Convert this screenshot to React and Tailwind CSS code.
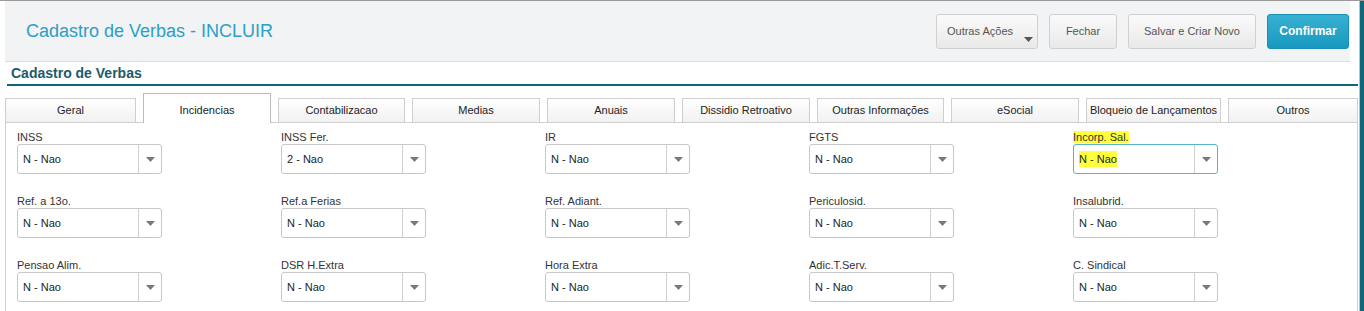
import React from 'react';

const tabs = [
  { label: 'Geral', w: 'w-[131px]' },
  { label: 'Incidencias', w: 'w-[128px]', active: true },
  { label: 'Contabilizacao', w: 'w-[127px]' },
  { label: 'Medias', w: 'w-[128px]' },
  { label: 'Anuais', w: 'w-[128px]' },
  { label: 'Dissidio Retroativo', w: 'w-[128px]' },
  { label: 'Outras Informações', w: 'w-[127px]' },
  { label: 'eSocial', w: 'w-[128px]' },
  { label: 'Bloqueio de Lançamentos', w: 'w-[135px]' },
  { label: 'Outros', w: 'w-[130px]' },
];

const fields = [
  { label: 'INSS', value: 'N - Nao' },
  { label: 'INSS Fer.', value: '2 - Nao' },
  { label: 'IR', value: 'N - Nao' },
  { label: 'FGTS', value: 'N - Nao' },
  { label: 'Incorp. Sal.', value: 'N - Nao', focused: true },
  { label: 'Ref. a 13o.', value: 'N - Nao' },
  { label: 'Ref.a Ferias', value: 'N - Nao' },
  { label: 'Ref. Adiant.', value: 'N - Nao' },
  { label: 'Periculosid.', value: 'N - Nao' },
  { label: 'Insalubrid.', value: 'N - Nao' },
  { label: 'Pensao Alim.', value: 'N - Nao' },
  { label: 'DSR H.Extra', value: 'N - Nao' },
  { label: 'Hora Extra', value: 'N - Nao' },
  { label: 'Adic.T.Serv.', value: 'N - Nao' },
  { label: 'C. Sindical', value: 'N - Nao' },
];

const Arrow = ({ className }) => (
  <svg width="9" height="5" viewBox="0 0 9 5" className={className}>
    <path d="M0 0 L9 0 L4.5 5 Z" fill="currentColor" />
  </svg>
);

const SelectField = ({ label, value, focused }) => (
  <div className="flex flex-col">
    <div className="h-[14px] leading-[14px] text-[11px] text-[#333]">
      <span className={focused ? 'bg-[#ffff3c]' : ''}>{label}</span>
    </div>
    <div
      className={`w-[145px] h-[30px] rounded-[3px] border bg-white flex items-stretch ${
        focused ? 'border-[#56b4d3]' : 'border-[#c8c8c8]'
      }`}
    >
      <div className="flex-1 flex items-center pl-[5px] text-[11px] text-[#222]">
        <span className={focused ? 'bg-[#ffff3c]' : ''}>{value}</span>
      </div>
      <div className="w-[23px] border-l border-[#cfcfcf] flex items-center justify-center">
        <Arrow className="text-[#7a7a7a]" />
      </div>
    </div>
  </div>
);

const Btn = ({ children, className = '' }) => (
  <button
    className={`h-[35px] rounded-[3px] border border-[#d0d0d0] bg-gradient-to-b from-[#fafafa] to-[#e9e9e9] text-[11px] text-[#555] ${className}`}
  >
    {children}
  </button>
);

export default function App() {
  return (
    <div className="w-[1364px] h-[311px] overflow-hidden bg-white border-t border-[#9a9a9a] flex font-['Liberation_Sans',Arial,sans-serif]">
      <div className="w-[1359px] pl-[5px] flex flex-col">
        {/* Header */}
        <div className="w-[1345px] h-[61px] shrink-0 bg-[#f2f3f4] border-b border-[#dcdcdc] flex items-center justify-between pl-[21px] pr-[1px]">
          <h1 className="text-[18px] text-[#2a9fc7]">Cadastro de Verbas - INCLUIR</h1>
          <div className="flex items-center gap-[11px]">
            <Btn className="relative w-[102px] pr-[14px]">
              Outras Ações
              <Arrow className="absolute right-[4px] bottom-[6px] text-[#555]" />
            </Btn>
            <Btn className="w-[68px]">Fechar</Btn>
            <Btn className="w-[128px]">Salvar e Criar Novo</Btn>
            <button className="w-[82px] h-[35px] rounded-[3px] border border-[#1b8fb2] bg-gradient-to-b from-[#36b1d2] to-[#1798bf] text-[12px] font-bold text-white">
              Confirmar
            </button>
          </div>
        </div>

        {/* Sub title */}
        <div className="ml-[2px] w-[1351px] h-[24px] shrink-0 border-b-2 border-[#0e677a] px-[4px] pt-[1px] text-[14px] leading-[21px] font-bold text-[#1c5a6c]">
          Cadastro de Verbas
        </div>

        {/* Tabs */}
        <div className="mt-[7px] flex items-end gap-[7px]">
          {tabs.map((t) =>
            t.active ? (
              <div
                key={t.label}
                className={`${t.w} h-[30px] -mb-px relative z-10 bg-white border border-b-0 border-[#bcbcbc] flex justify-center pt-[8px] text-[11px] text-[#222]`}
              >
                {t.label}
              </div>
            ) : (
              <div
                key={t.label}
                className={`${t.w} h-[24px] border border-b-0 border-[#cfcfcf] bg-gradient-to-b from-white to-[#f1f1f1] flex items-center justify-center text-[11px] text-[#222] whitespace-nowrap`}
              >
                {t.label}
              </div>
            )
          )}
        </div>

        {/* Panel */}
        <div className="w-[1353px] flex-1 border border-b-0 border-[#cfcfcf] pl-[11px] pt-[7px]">
          <div className="grid grid-cols-[repeat(5,264px)] gap-y-[20px]">
            {fields.map((f) => (
              <SelectField key={f.label} {...f} />
            ))}
          </div>
        </div>
      </div>
      <div className="w-[1px] bg-[#bdbdbd]" />
      <div className="w-[4px] bg-[#0e677a]" />
    </div>
  );
}
